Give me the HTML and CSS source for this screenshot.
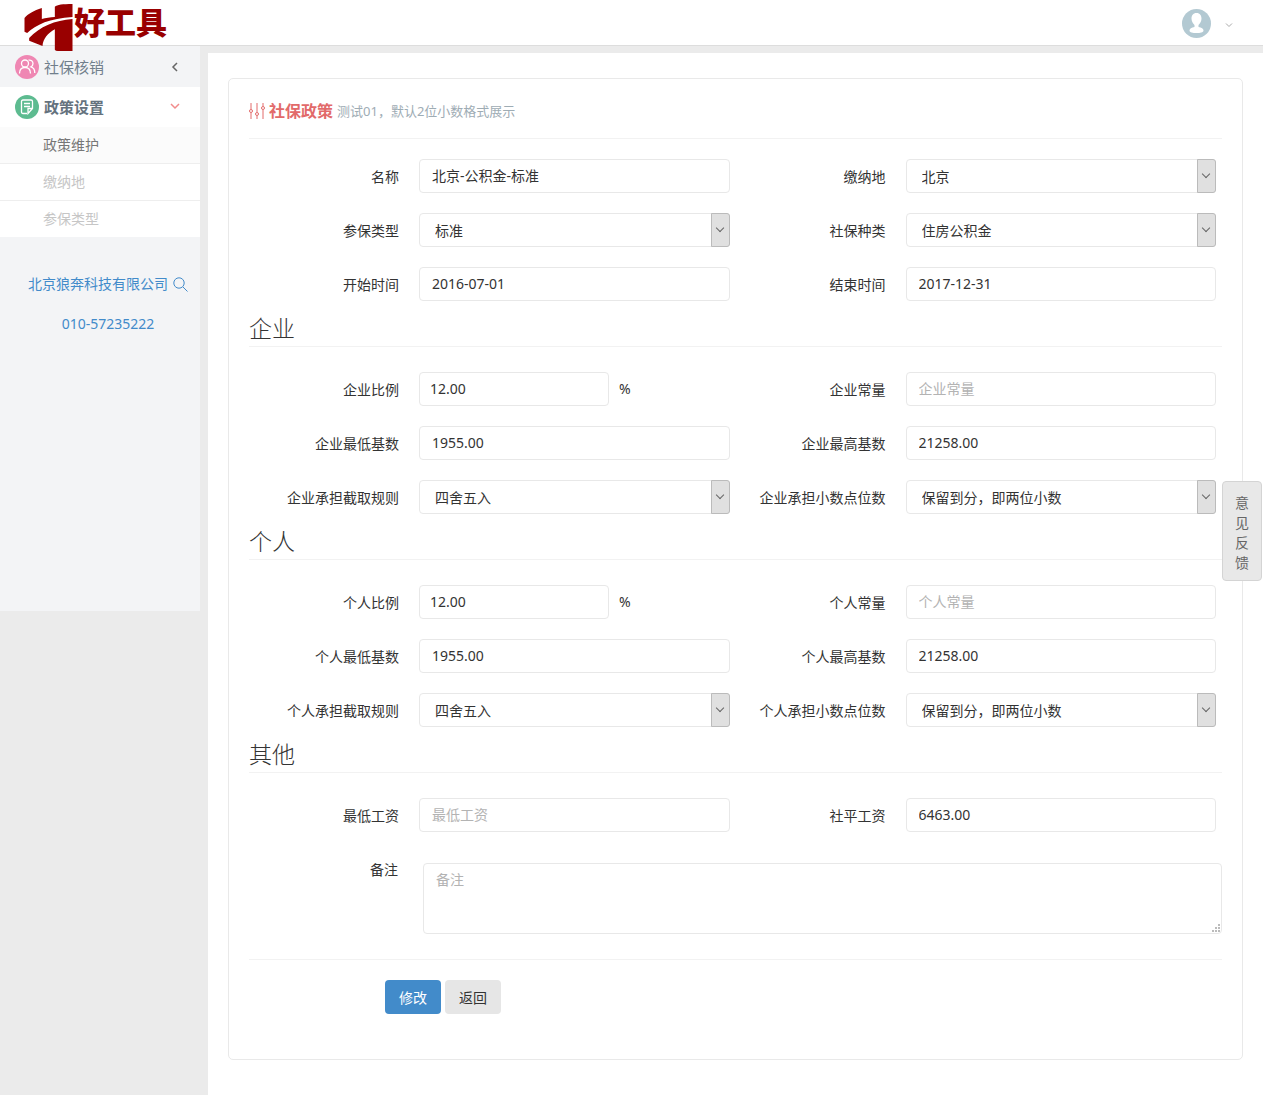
FILE: index.html
```html
<!DOCTYPE html>
<html lang="zh-CN">
<head>
<meta charset="utf-8">
<meta name="viewport" content="width=device-width, initial-scale=1">
<title>社保政策</title>
<link rel="stylesheet" href="styles.css">
</head>
<body>
<header class="topbar">
  <a class="logo" href="#">
    <svg class="logo-mark" viewBox="14 12 144 141" aria-hidden="true"><path d="M66 24C42 32 24 42 14 54V95L22 99C48 74 90 55 158 51V12C128 12 112 14 105 20V51C90 52 78 54 66 57ZM158 57C105 61 60 80 28 114V122L68 138C70 116 84 100 105 88V149Q107 153 114 153H158Z"/></svg>
    <span class="logo-text">好工具</span>
  </a>
  <button class="user" type="button" aria-label="用户菜单">
    <svg class="avatar" viewBox="0 0 29 29" aria-hidden="true"><circle cx="14.500" cy="14.500" r="14.500" fill="#b3c9d2"/><path d="M14.500 4C11 4 9.500 6.500 9.500 9.500C9.500 12.500 11 14.500 12.500 16V18C9.500 18.500 7.500 19.500 7.500 21.500C7.500 23.500 11 24 14.500 24S21.500 23.500 21.500 21.500C21.500 19.500 19.500 18.500 16.500 18V16C18 14.500 19.500 12.500 19.500 9.500C19.500 6.500 18 4 14.500 4Z" fill="#fff"/></svg>
    <svg class="caret" viewBox="0 0 8 6" aria-hidden="true"><path d="M1 1.500L4 4.500L7 1.500"/></svg>
  </button>
</header>
<div class="layout">
  <nav class="sidebar">
    <a class="menu" href="#">
      <svg class="menu-icon" viewBox="0 0 24 24" aria-hidden="true"><circle cx="12" cy="12" r="12" fill="#ef87b3"/><g class="line"><circle cx="10" cy="8.500" r="3.500"/><path d="M4.500 18.500C4.500 14.500 7 12.500 10 12.500S15.500 14.500 15.500 18.500M13.500 5.200C16 4.500 18 6.200 18 8.500C18 10 17.300 11.200 16 11.800C18.500 12.500 19.800 14.800 19.800 18"/></g></svg>
      <span>社保核销</span>
      <svg class="arrow" viewBox="0 0 10 10" aria-hidden="true"><path d="M7 1L3 5L7 9"/></svg>
    </a>
    <a class="menu open" href="#">
      <svg class="menu-icon" viewBox="0 0 24 24" aria-hidden="true"><circle cx="12" cy="12" r="12" fill="#5dbb90"/><g class="line"><path d="M12 18.500H8Q6.500 18.500 6.500 17V6.500Q6.500 5 8 5H16Q17.500 5 17.500 6.500V13.500L13 18.500V13.500H17.500M9 8.500H15M9 11.500H15"/></g></svg>
      <span>政策设置</span>
      <svg class="arrow" viewBox="0 0 10 10" aria-hidden="true"><path d="M1 2L5 6L9 2"/></svg>
    </a>
    <ul class="submenu">
      <li><a class="current" href="#">政策维护</a></li>
      <li><a href="#">缴纳地</a></li>
      <li><a href="#">参保类型</a></li>
    </ul>
    <div class="contact">
      <a href="#">北京狼奔科技有限公司 <svg class="search" viewBox="0 0 15 15" aria-hidden="true"><circle cx="6" cy="6" r="5.200"/><path d="M10 10L14.500 14.500"/></svg></a>
      <a href="#">010-57235222</a>
    </div>
  </nav>
  <main class="content">
    <form class="card">
      <h1 class="title">
        <svg class="sliders" viewBox="0 0 16 16" aria-hidden="true"><path d="M2 0V6M2 10V16M8 0V9M8 13V16M14 0V3M14 7V16"/><circle cx="2" cy="8" r="1.500"/><circle cx="8" cy="11" r="1.500"/><circle cx="14" cy="5" r="1.500"/></svg>
        <span>社保政策</span>
        <small>测试01，默认2位小数格式展示</small>
      </h1>
      <div class="grid">
        <div class="field"><label for="name">名称</label><input id="name" type="text" value="北京-公积金-标准"></div>
        <div class="field"><label for="place">缴纳地</label><span class="select"><select id="place"><option>北京</option></select></span></div>
        <div class="field"><label for="kind">参保类型</label><span class="select"><select id="kind"><option>标准</option></select></span></div>
        <div class="field"><label for="ins">社保种类</label><span class="select"><select id="ins"><option>住房公积金</option></select></span></div>
        <div class="field"><label for="start">开始时间</label><input id="start" type="text" value="2016-07-01"></div>
        <div class="field"><label for="end">结束时间</label><input id="end" type="text" value="2017-12-31"></div>
      </div>
      <h2>企业</h2>
      <div class="grid">
        <div class="field"><label for="c-rate">企业比例</label><span class="rate"><input id="c-rate" type="text" value="12.00">%</span></div>
        <div class="field"><label for="c-const">企业常量</label><input id="c-const" type="text" placeholder="企业常量"></div>
        <div class="field"><label for="c-min">企业最低基数</label><input id="c-min" type="text" value="1955.00"></div>
        <div class="field"><label for="c-max">企业最高基数</label><input id="c-max" type="text" value="21258.00"></div>
        <div class="field"><label for="c-rule">企业承担截取规则</label><span class="select"><select id="c-rule"><option>四舍五入</option></select></span></div>
        <div class="field"><label for="c-dec">企业承担小数点位数</label><span class="select"><select id="c-dec"><option>保留到分，即两位小数</option></select></span></div>
      </div>
      <h2>个人</h2>
      <div class="grid">
        <div class="field"><label for="p-rate">个人比例</label><span class="rate"><input id="p-rate" type="text" value="12.00">%</span></div>
        <div class="field"><label for="p-const">个人常量</label><input id="p-const" type="text" placeholder="个人常量"></div>
        <div class="field"><label for="p-min">个人最低基数</label><input id="p-min" type="text" value="1955.00"></div>
        <div class="field"><label for="p-max">个人最高基数</label><input id="p-max" type="text" value="21258.00"></div>
        <div class="field"><label for="p-rule">个人承担截取规则</label><span class="select"><select id="p-rule"><option>四舍五入</option></select></span></div>
        <div class="field"><label for="p-dec">个人承担小数点位数</label><span class="select"><select id="p-dec"><option>保留到分，即两位小数</option></select></span></div>
      </div>
      <h2>其他</h2>
      <div class="grid">
        <div class="field"><label for="low">最低工资</label><input id="low" type="text" placeholder="最低工资"></div>
        <div class="field"><label for="avg">社平工资</label><input id="avg" type="text" value="6463.00"></div>
      </div>
      <div class="remark"><label for="note">备注</label><span class="note"><textarea id="note" placeholder="备注"></textarea><svg class="grip" viewBox="0 0 8 8" aria-hidden="true"><path d="M0 6h2v2H0zM3 6h2v2H3zM6 6h2v2H6zM3 3h2v2H3zM6 3h2v2H6zM6 0h2v2H6z"/></svg></span></div>
      <div class="actions">
        <button class="btn primary" type="button">修改</button>
        <button class="btn" type="button">返回</button>
      </div>
    </form>
  </main>
</div>
<button class="feedback" type="button">意见反馈</button>
</body>
</html>
```
FILE: styles.css
```css
*, ::before, ::after { box-sizing: border-box; }
body {
  display: flex;
  flex-direction: column;
  min-height: 100vh;
  margin: 0;
  background: #ebebeb;
  color: #333;
  font: 14px/20px "Noto Sans", "Noto Sans CJK SC", sans-serif;
}
a { color: #428bca; text-decoration: none; }
input, select, textarea, button { font: inherit; color: inherit; }
svg { flex: none; }

.topbar {
  position: relative;
  display: flex;
  justify-content: space-between;
  height: 46px;
  padding: 4px 30px 0 24px;
  background: #fff;
  border-bottom: 1px solid #ddd;
}
.logo { display: flex; gap: 1px; color: #900; }
.logo-mark { width: 49px; height: 47px; fill: #900; }
.logo-text { font-size: 31px; line-height: 36px; font-weight: 900; }
.user {
  display: flex;
  align-items: center;
  gap: 14px;
  height: 38px;
  padding: 0;
  border: 0;
  background: none;
}
.avatar { width: 29px; height: 29px; }
.caret { width: 8px; height: 6px; margin-top: 4px; fill: none; stroke: #aaa; }

.layout { display: flex; flex: 1; }
.sidebar {
  flex: none;
  align-self: flex-start;
  width: 200px;
  min-height: 565px;
  background: #f3f4f6;
}
.menu {
  display: flex;
  align-items: center;
  gap: 5px;
  height: 41px;
  padding: 0 20px 0 15px;
  color: #717f8c;
  font-size: 15px;
}
.menu-icon { width: 24px; height: 24px; }
.menu-icon .line { fill: none; stroke: #fff; stroke-width: 1.3; }
.arrow { width: 10px; height: 10px; margin-left: auto; fill: none; stroke: #666; stroke-width: 1.5; }
.menu.open { height: 40px; background: #fff; color: #65727e; font-weight: bold; }
.menu.open .arrow { stroke: #f28b8b; }
.submenu { margin: 0; padding: 0; list-style: none; background: #fff; }
.submenu li + li { border-top: 1px solid #eee; }
.submenu a { display: block; padding: 8px 0 8px 43px; color: #c6c6c6; }
.submenu .current { background: #fbfbfb; color: #777; }
.contact { display: flex; flex-direction: column; align-items: center; gap: 20px; padding: 37px 0 0 16px; }
.contact a { display: flex; align-items: center; gap: 5px; }
.search { width: 15px; height: 15px; fill: none; stroke: #428bca; }

.content {
  flex: 1;
  min-width: 0;
  margin: 7px 0 0 8px;
  padding: 25px 20px 35px;
  background: #fff;
}
.card { padding: 20px 20px 45px; border: 1px solid #e9e9e9; border-radius: 5px; }
.title {
  display: flex;
  align-items: center;
  gap: 4px;
  height: 40px;
  margin: 0 0 20px;
  padding-bottom: 15px;
  border-bottom: 1px solid #f2f2f2;
  color: #e26a6a;
  font-size: 16px;
}
.title small { color: #9eacb4; font-size: 13px; font-weight: normal; }
.sliders { width: 16px; height: 16px; fill: none; stroke: #e26a6a; }
h2 {
  margin: 0 0 25px;
  padding-top: 10px;
  border-bottom: 1px solid #f2f2f2;
  font-size: 23px;
  line-height: 35px;
  font-weight: 300;
}
.grid { display: grid; grid-template-columns: 1fr 1fr; row-gap: 20px; }
.field { display: flex; align-items: center; gap: 20px; padding-right: 6px; }
.field label { flex: none; width: 150px; padding-top: 2px; text-align: right; white-space: nowrap; }
.field > input, .select, .note { flex: 1; min-width: 0; }
input, select, textarea {
  height: 34px;
  padding: 0 12px 2px;
  border: 1px solid #e8e8e8;
  border-radius: 4px;
  background: #fff;
}
::placeholder { color: #b3b3b3; opacity: 1; }
.select, .note { position: relative; display: flex; }
.select select { flex: 1; min-width: 0; padding: 2px 30px 0 15px; appearance: none; }
.select::before {
  content: "";
  position: absolute;
  top: 0;
  right: 0;
  width: 19px;
  height: 34px;
  border: 1px solid #bbb;
  border-radius: 0 3px 3px 0;
  background: #e0e0e0;
  pointer-events: none;
}
.select::after {
  content: "";
  position: absolute;
  top: 12px;
  right: 7px;
  width: 6px;
  height: 6px;
  border: solid #666;
  border-width: 0 1px 1px 0;
  transform: rotate(45deg);
  pointer-events: none;
}
.rate { display: flex; align-items: center; gap: 10px; }
.rate input { width: 190px; padding: 0 10px 2px; }
.remark { display: flex; gap: 25px; margin-top: 31px; }
.remark label { flex: none; width: 149px; margin-top: -3px; text-align: right; }
.note textarea { flex: 1; height: 71px; padding: 6px 12px; resize: none; }
.grip { position: absolute; right: 2px; bottom: 2px; width: 8px; height: 8px; fill: #bbb; }
.actions {
  display: flex;
  gap: 4px;
  margin-top: 25px;
  padding: 20px 0 0 136px;
  border-top: 1px solid #f2f2f2;
}
.btn { height: 34px; padding: 2px 14px 0; border: 0; border-radius: 4px; background: #e6e6e6; }
.primary { background: #428bca; color: #fff; }

.feedback {
  position: fixed;
  top: 481px;
  right: 1px;
  width: 40px;
  padding: 11px 12px 7px;
  border: 1px solid #d4d4d4;
  border-radius: 4px;
  background: #e8e8e8;
  color: #666;
}
```
